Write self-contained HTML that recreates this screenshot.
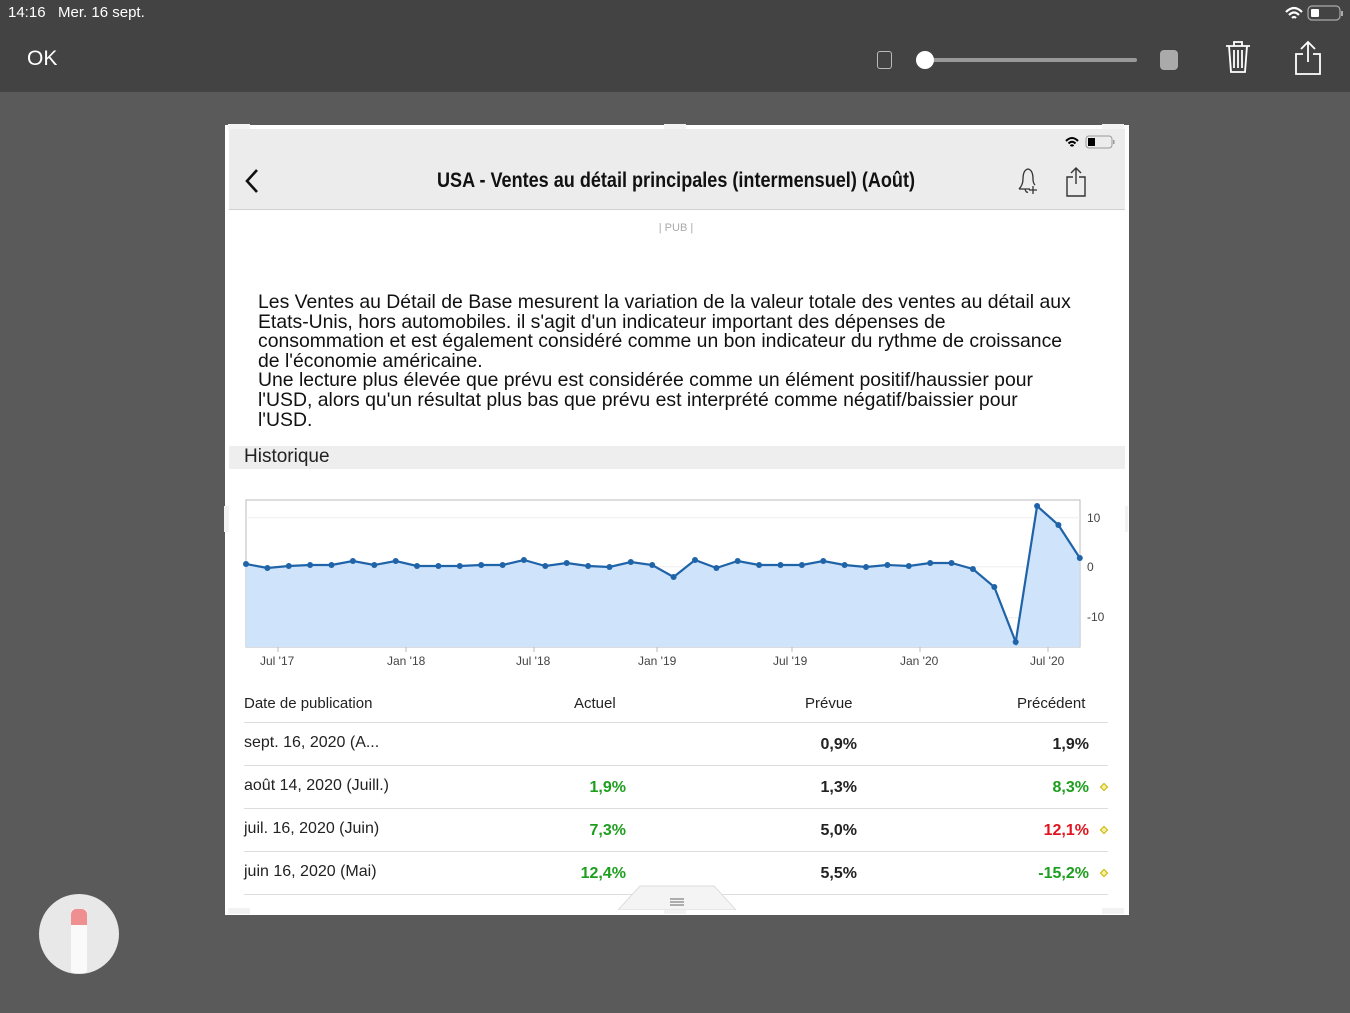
<!DOCTYPE html>
<html><head><meta charset="utf-8"><style>
*{margin:0;padding:0;box-sizing:border-box}
body{width:1350px;height:1013px;overflow:hidden;background:#5a5a5a;font-family:"Liberation Sans",sans-serif;position:relative}
.a{position:absolute}
.top{left:0;top:0;width:1350px;height:92px;background:#434343}
.card{left:229px;top:129px;width:896px;height:782px;background:#fff;overflow:hidden}
.t{white-space:nowrap}
.row{position:absolute;left:14px;width:864px;height:1px;background:#ddd}
.g{color:#1e9e1e}.r{color:#e0141e}
.num{font-weight:bold;font-size:16px}
.dia{position:absolute;width:6px;height:6px;border:1px solid #c8b400;background:#f4f0a0;transform:rotate(45deg)}
.h{position:absolute;background:#f2f2f2;width:22px;height:6px}
</style></head><body>
<div class="a top"></div>
<div class="a t" style="left:8px;top:4px;color:#fff;font-size:15px">14:16&nbsp;&nbsp;&nbsp;Mer. 16 sept.</div>
<svg class="a" style="left:1284px;top:4px" width="62" height="18"><path d="M2 8 Q10 0 18 8 M5 11 Q10 6 15 11 M8 14 Q10 12 12 14" stroke="#fff" stroke-width="2.2" fill="none"/><rect x="24" y="2" width="32" height="14" rx="4" fill="none" stroke="#aaa" stroke-width="1.2"/><rect x="27" y="5" width="8" height="8" rx="1" fill="#fff"/><rect x="57" y="7" width="2" height="5" fill="#aaa"/></svg>
<div class="a t" style="left:27px;top:47px;color:#fff;font-size:21px">OK</div>
<div class="a" style="left:877px;top:51px;width:15px;height:18px;border:1.5px solid #bbb;border-radius:3px"></div>
<div class="a" style="left:925px;top:58px;width:212px;height:4px;background:#999;border-radius:2px"></div>
<div class="a" style="left:916px;top:51px;width:18px;height:18px;background:#fff;border-radius:50%"></div>
<div class="a" style="left:1160px;top:50px;width:18px;height:20px;background:#aaa;border-radius:4px"></div>
<svg class="a" style="left:1224px;top:40px" width="28" height="34"><path d="M2 6 H26 M10 6 V2 H18 V6 M5 6 L7 32 H21 L23 6 M10 10 V28 M14 10 V28 M18 10 V28" stroke="#fff" stroke-width="1.8" fill="none"/></svg>
<svg class="a" style="left:1294px;top:40px" width="28" height="36"><path d="M14 2 V22 M7 9 L14 2 L21 9 M9 14 H2 V34 H26 V14 H19" stroke="#fff" stroke-width="1.8" fill="none"/></svg>

<div class="a" style="left:225px;top:125px;width:904px;height:790px;background:#fff;"></div>
<div class="h" style="left:228px;top:124px"></div><div class="h" style="left:664px;top:124px"></div><div class="h" style="left:1102px;top:124px"></div>
<div class="a" style="left:224px;top:506px;width:6px;height:26px;background:#f2f2f2"></div>
<div class="a" style="left:1122px;top:506px;width:6px;height:26px;background:#f2f2f2"></div>

<div class="a card">
 <div class="a" style="left:0;top:0;width:896px;height:81px;background:#ececec;border-bottom:1px solid #d0d0d0"></div>
 <svg class="a" style="left:835px;top:5px" width="54" height="16"><path d="M2 7 Q8 1 14 7 M4.5 9.5 Q8 6 11.5 9.5 M6.5 12 Q8 10.5 9.5 12" stroke="#000" stroke-width="2" fill="none"/><rect x="22" y="2" width="26" height="12" rx="3" fill="none" stroke="#999"/><rect x="24" y="4" width="7" height="8" fill="#000"/><rect x="49" y="6" width="1.5" height="4" fill="#999"/></svg>
 <svg class="a" style="left:15px;top:39px" width="16" height="26"><path d="M13 2 L3 13 L13 24" stroke="#111" stroke-width="2.6" fill="none"/></svg>
 <div class="a t" style="left:1px;width:892px;top:40px;text-align:center;font-size:21px;font-weight:bold;color:#111;transform:scaleX(0.86);transform-origin:446px 0">USA - Ventes au détail principales (intermensuel) (Août)</div>
 <svg class="a" style="left:786px;top:38px" width="28" height="30"><path d="M4 22 Q8 18 8 12 Q8 3 13 2 Q18 3 18 12 Q18 16 20 18 M4 22 H15 M10 22 Q11 26 13 25 M18 19 V27 M14 23 H22" stroke="#333" stroke-width="1.3" fill="none"/></svg>
 <svg class="a" style="left:835px;top:37px" width="24" height="32"><path d="M12 2 V18 M7 7 L12 2 L17 7 M9 11 H3 V30 H21 V11 H15" stroke="#333" stroke-width="1.4" fill="none"/></svg>
 <div class="a t" style="left:1px;width:892px;top:93px;text-align:center;font-size:11px;color:#aaa">| PUB |</div>
 <div class="a t" style="left:29px;top:164px;font-size:19.4px;line-height:19.6px;color:#111">Les Ventes au Détail de Base mesurent la variation de la valeur totale des ventes au détail aux<br>Etats-Unis, hors automobiles. il s'agit d'un indicateur important des dépenses de<br>consommation et est également considéré comme un bon indicateur du rythme de croissance<br>de l'économie américaine.<br>Une lecture plus élevée que prévu est considérée comme un élément positif/haussier pour<br>l'USD, alors qu'un résultat plus bas que prévu est interprété comme négatif/baissier pour<br>l'USD.</div>
 <div class="a" style="left:0;top:317px;width:896px;height:23px;background:#eeeeee"></div>
 <div class="a t" style="left:15px;top:317px;font-size:19px;color:#222">Historique</div>
</div>
<div class="h" style="left:228px;top:908px"></div><div class="h" style="left:664px;top:908px"></div><div class="h" style="left:1102px;top:908px"></div>

<svg class="a" style="left:230px;top:490px" width="892" height="190">
 <rect x="16" y="10" width="834" height="147" fill="#fff" stroke="#bbb"/>
 <line x1="16" y1="27.7" x2="850" y2="27.7" stroke="#eee"/><line x1="16" y1="76.7" x2="850" y2="76.7" stroke="#eee"/><line x1="16" y1="127.7" x2="850" y2="127.7" stroke="#eee"/>
 <g transform="translate(-230,-490)">
 <polygon fill="#cfe4fb" points="246,647 246,564 267.4,568 288.8,566 310.1,565 331.5,565 352.9,561 374.3,565 395.7,561 417,566 438.4,566 459.8,566 481.2,565 502.6,565 523.9,560 545.3,566 566.7,563 588.1,566 609.5,567 630.8,562 652.2,565 673.6,577 695,560 716.4,568 737.7,561 759.1,565 780.5,565 801.9,565 823.3,561 844.6,565 866,567 887.4,565 908.8,566 930.2,563 951.5,563 972.9,569 994.3,587 1015.7,642 1037.1,506 1058.4,525 1079.8,558 1079.8,647"/>
 <polyline fill="none" stroke="#1f63a8" stroke-width="2.2" points="246,564 267.4,568 288.8,566 310.1,565 331.5,565 352.9,561 374.3,565 395.7,561 417,566 438.4,566 459.8,566 481.2,565 502.6,565 523.9,560 545.3,566 566.7,563 588.1,566 609.5,567 630.8,562 652.2,565 673.6,577 695,560 716.4,568 737.7,561 759.1,565 780.5,565 801.9,565 823.3,561 844.6,565 866,567 887.4,565 908.8,566 930.2,563 951.5,563 972.9,569 994.3,587 1015.7,642 1037.1,506 1058.4,525 1079.8,558"/>
 <g fill="#1f63a8"><circle cx="246" cy="564" r="3"/><circle cx="267.4" cy="568" r="3"/><circle cx="288.8" cy="566" r="3"/><circle cx="310.1" cy="565" r="3"/><circle cx="331.5" cy="565" r="3"/><circle cx="352.9" cy="561" r="3"/><circle cx="374.3" cy="565" r="3"/><circle cx="395.7" cy="561" r="3"/><circle cx="417" cy="566" r="3"/><circle cx="438.4" cy="566" r="3"/><circle cx="459.8" cy="566" r="3"/><circle cx="481.2" cy="565" r="3"/><circle cx="502.6" cy="565" r="3"/><circle cx="523.9" cy="560" r="3"/><circle cx="545.3" cy="566" r="3"/><circle cx="566.7" cy="563" r="3"/><circle cx="588.1" cy="566" r="3"/><circle cx="609.5" cy="567" r="3"/><circle cx="630.8" cy="562" r="3"/><circle cx="652.2" cy="565" r="3"/><circle cx="673.6" cy="577" r="3"/><circle cx="695" cy="560" r="3"/><circle cx="716.4" cy="568" r="3"/><circle cx="737.7" cy="561" r="3"/><circle cx="759.1" cy="565" r="3"/><circle cx="780.5" cy="565" r="3"/><circle cx="801.9" cy="565" r="3"/><circle cx="823.3" cy="561" r="3"/><circle cx="844.6" cy="565" r="3"/><circle cx="866" cy="567" r="3"/><circle cx="887.4" cy="565" r="3"/><circle cx="908.8" cy="566" r="3"/><circle cx="930.2" cy="563" r="3"/><circle cx="951.5" cy="563" r="3"/><circle cx="972.9" cy="569" r="3"/><circle cx="994.3" cy="587" r="3"/><circle cx="1015.7" cy="642" r="3"/><circle cx="1037.1" cy="506" r="3"/><circle cx="1058.4" cy="525" r="3"/><circle cx="1079.8" cy="558" r="3"/></g>
 <g font-family="Liberation Sans" font-size="12" fill="#444"><text x="1087" y="522">10</text><text x="1087" y="571">0</text><text x="1087" y="621">-10</text>
 <text x="260" y="665">Jul '17</text><text x="387" y="665">Jan '18</text><text x="516" y="665">Jul '18</text><text x="638" y="665">Jan '19</text><text x="773" y="665">Jul '19</text><text x="900" y="665">Jan '20</text><text x="1030" y="665">Jul '20</text></g>
 <g stroke="#bbb"><line x1="278" y1="647" x2="278" y2="652"/><line x1="406" y1="647" x2="406" y2="652"/><line x1="534" y1="647" x2="534" y2="652"/><line x1="657" y1="647" x2="657" y2="652"/><line x1="792" y1="647" x2="792" y2="652"/><line x1="920" y1="647" x2="920" y2="652"/><line x1="1048" y1="647" x2="1048" y2="652"/></g>
 </g>
</svg>

<div class="a" style="left:230px;top:680px;width:892px;height:228px;overflow:hidden;font-size:16px;color:#222">
 <div class="a t" style="left:14px;top:15px;font-size:15px">Date de publication</div>
 <div class="a t" style="left:344px;top:15px;font-size:15px">Actuel</div>
 <div class="a t" style="left:575px;top:15px;font-size:15px">Prévue</div>
 <div class="a t" style="left:787px;top:15px;font-size:15px">Précédent</div>
 <div class="row" style="top:42px"></div>
 <div class="a t" style="left:14px;top:54px">sept. 16, 2020 (A...</div>
 <div class="a t num" style="right:265px;top:56px">0,9%</div>
 <div class="a t num" style="right:33px;top:56px">1,9%</div>
 <div class="row" style="top:85px"></div>
 <div class="a t" style="left:14px;top:97px">août 14, 2020 (Juill.)</div>
 <div class="a t num g" style="right:496px;top:99px">1,9%</div>
 <div class="a t num" style="right:265px;top:99px">1,3%</div>
 <div class="a t num g" style="right:33px;top:99px">8,3%</div><div class="dia" style="left:871px;top:104px"></div>
 <div class="row" style="top:128px"></div>
 <div class="a t" style="left:14px;top:140px">juil. 16, 2020 (Juin)</div>
 <div class="a t num g" style="right:496px;top:142px">7,3%</div>
 <div class="a t num" style="right:265px;top:142px">5,0%</div>
 <div class="a t num r" style="right:33px;top:142px">12,1%</div><div class="dia" style="left:871px;top:147px"></div>
 <div class="row" style="top:171px"></div>
 <div class="a t" style="left:14px;top:183px">juin 16, 2020 (Mai)</div>
 <div class="a t num g" style="right:496px;top:185px">12,4%</div>
 <div class="a t num" style="right:265px;top:185px">5,5%</div>
 <div class="a t num g" style="right:33px;top:185px">-15,2%</div><div class="dia" style="left:871px;top:190px"></div>
 <div class="row" style="top:214px"></div>
</div>
<svg class="a" style="left:618px;top:884px" width="118" height="26"><path d="M0 26 L22 2 H96 L118 26 Z" fill="#f4f4f4" stroke="#ddd"/><path d="M52 15 H66 M52 18 H66 M52 21 H66" stroke="#666"/></svg>

<div class="a" style="left:39px;top:894px;width:80px;height:80px;border-radius:50%;background:#e8e8e8"></div>
<div class="a" style="left:71px;top:909px;width:16px;height:64px;background:#fafafa;border-radius:3px"></div>
<div class="a" style="left:71px;top:909px;width:16px;height:16px;background:#ef8f8f;border-radius:5px 5px 0 0"></div>
</body></html>
